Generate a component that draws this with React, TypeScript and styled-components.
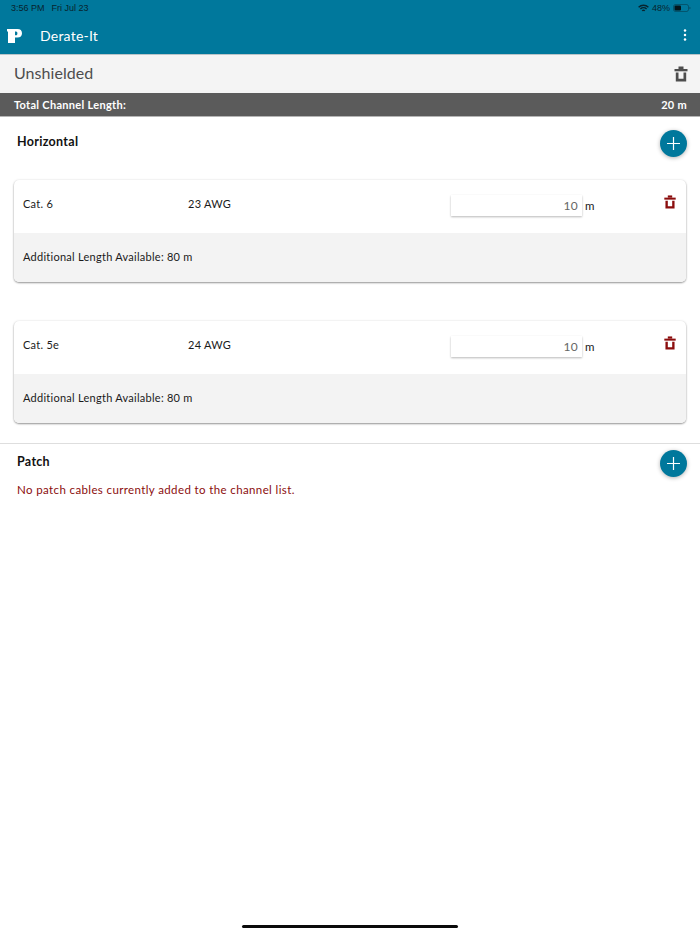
import React from 'react';
import styled, { createGlobalStyle } from 'styled-components';

const GlobalStyle = createGlobalStyle`
  html, body {
    margin: 0;
    padding: 0;
    background: #fff;
    font-family: "Lato", "Open Sans", sans-serif;
  }
`;

const Page = styled.div`
  position: relative;
  width: 700px;
  height: 934px;
  overflow: hidden;
  background: #fff;
`;

const Header = styled.header`
  height: 54px;
  background: #00789c;
  border-bottom: 1px solid #b9c4c8;
  box-sizing: content-box;
`;

const StatusBar = styled.div`
  height: 16px;
  padding: 0 9px 0 11px;
  display: flex;
  align-items: center;
  justify-content: space-between;
  font-family: "Liberation Sans", sans-serif;
  font-size: 9px;
  color: #08242e;
`;

const StatusGroup = styled.div`
  display: flex;
  align-items: center;
  gap: 7px;
`;

const BatteryGroup = styled.div`
  display: flex;
  align-items: center;
  gap: 3px;
`;

const TitleRow = styled.div`
  height: 38px;
  padding: 0 13px 0 7px;
  display: flex;
  align-items: center;
  color: #fff;
`;

const LogoBox = styled.div`
  display: flex;
  margin-top: 2px;
`;

const AppTitle = styled.div`
  margin-left: 18px;
  font-size: 14px;
  letter-spacing: 0.22px;
  flex: 1;
`;

const SubBar = styled.div`
  height: 38px;
  padding: 0 11px 0 14px;
  background: #f4f4f4;
  display: flex;
  align-items: center;
  justify-content: space-between;
  color: #4d4d4d;
`;

const SubTitle = styled.div`
  margin-top: -3px;
  font-size: 16px;
  letter-spacing: 0.05px;
`;

const TotalBar = styled.div`
  height: 23px;
  padding: 0 13px 0 14px;
  background: #5b5b5b;
  border-bottom: 1px solid #b5b5b5;
  display: flex;
  align-items: center;
  justify-content: space-between;
  color: #fff;
  font-size: 11px;
  font-weight: 700;
  letter-spacing: 0.3px;
`;

const SectionHead = styled.div<{ $height: number }>`
  height: ${(p) => p.$height}px;
  padding: 0 13px 0 17px;
  display: flex;
  align-items: flex-start;
  justify-content: space-between;
`;

const SectionTitle = styled.div<{ $top: number }>`
  margin-top: ${(p) => p.$top}px;
  font-size: 12.5px;
  font-weight: 700;
  letter-spacing: 0.3px;
  color: #111;
`;

const Fab = styled.button<{ $top: number }>`
  width: 27px;
  height: 27px;
  margin-top: ${(p) => p.$top}px;
  padding: 0;
  border: 0;
  border-radius: 50%;
  background: #00789c;
  box-shadow: 0 1px 4px rgba(0, 0, 0, 0.3);
  display: flex;
  align-items: center;
  justify-content: center;
`;

const CardList = styled.div`
  display: flex;
  flex-direction: column;
  gap: 39px;
  padding: 0 14px;
`;

const Card = styled.div`
  height: 102px;
  border-radius: 5px;
  overflow: hidden;
  background: #fff;
  box-shadow: 0 1px 2px rgba(0, 0, 0, 0.4), 0 0 3px rgba(0, 0, 0, 0.08);
`;

const CardTop = styled.div`
  height: 53px;
  padding-left: 9px;
  display: flex;
  align-items: center;
  font-size: 11px;
  letter-spacing: 0.26px;
  color: #1a1a1a;
`;

const CatCell = styled.div`
  width: 165px;
  margin-top: -7px;
`;

const AwgCell = styled.div`
  width: 263px;
  margin-top: -7px;
`;

const LengthBox = styled.div`
  width: 131px;
  height: 21px;
  margin-top: -3px;
  padding-right: 4px;
  box-sizing: border-box;
  display: flex;
  align-items: center;
  justify-content: flex-end;
  background: #fff;
  box-shadow: 0 1px 2px rgba(0, 0, 0, 0.28);
  font-size: 12px;
  color: #666;
  letter-spacing: 0.3px;
`;

const Unit = styled.div`
  width: 78px;
  margin-left: 3px;
  margin-top: -3px;
  font-size: 11.5px;
`;

const CardTrash = styled.div`
  display: flex;
  margin-top: -10px;
`;

const CardBottom = styled.div`
  height: 49px;
  padding: 0 0 2px 9px;
  box-sizing: border-box;
  display: flex;
  align-items: center;
  background: #f3f3f3;
  font-size: 11px;
  letter-spacing: 0.26px;
  color: #1a1a1a;
`;

const Divider = styled.div`
  height: 1px;
  margin-top: 20px;
  background: #dedede;
`;

const EmptyNote = styled.div`
  padding-left: 17px;
  margin-top: -6px;
  font-size: 11.5px;
  letter-spacing: 0.38px;
  color: #8b0d0d;
`;

const HomeIndicator = styled.div`
  position: absolute;
  left: 242px;
  bottom: 6px;
  width: 216px;
  height: 3px;
  border-radius: 2px;
  background: #0a0a0a;
`;

const TrashIcon = ({ color, size }: { color: string; size: number }) => (
  <svg width={size} height={size} viewBox="0 0 16 16" fill={color}>
    <rect x="5.5" y="0.5" width="5" height="2.5" />
    <rect x="1.5" y="3" width="13" height="2.3" />
    <path d="M2.8 6.6h2.7v6.2h5V6.6h2.7v8.9H2.8z" />
  </svg>
);

const PlusIcon = () => (
  <svg width="13" height="13" viewBox="0 0 13 13" stroke="#fff" strokeWidth="1.2">
    <path d="M6.5 0v13M0 6.5h13" />
  </svg>
);

const Logo = () => (
  <svg width="15" height="14" viewBox="0 0 15 14" fill="#fff">
    <path
      fillRule="evenodd"
      d="M0 0h10.5C13.4 0 15 1.6 15 4.2s-1.6 4.4-4.5 4.4H8V14H1V2.5H0zM8 2.6v3.6h1c.9 0 1.4-.7 1.4-1.8S9.900 2.600 9 2.600z"
    />
  </svg>
);

const MoreIcon = () => (
  <svg width="4" height="12" viewBox="0 0 4 12" fill="#fff">
    <circle cx="2" cy="1.5" r="1.25" />
    <circle cx="2" cy="6" r="1.25" />
    <circle cx="2" cy="10.5" r="1.25" />
  </svg>
);

const WifiIcon = () => (
  <svg width="11" height="9" viewBox="0 0 11 9" fill="none" stroke="#08242e" strokeWidth="1.4">
    <path d="M.6 3.2a7 7 0 0 1 9.8 0" />
    <path d="M2.4 5a4.4 4.4 0 0 1 6.2 0" />
    <path d="M4.2 6.8a1.900 1.900 0 0 1 2.600 0" />
  </svg>
);

const BatteryIcon = () => (
  <svg width="18" height="8" viewBox="0 0 18 8">
    <rect x="0.5" y="0.5" width="15" height="7" rx="2" fill="none" stroke="#08242e" strokeWidth="0.7" opacity="0.6" />
    <rect x="1.5" y="1.5" width="6.5" height="5" rx="1" fill="#04141a" />
    <path d="M16.5 2.8c.7.2 1 .6 1 1.2s-.3 1-1 1.2z" fill="#08242e" opacity="0.6" />
  </svg>
);

const cables = [
  { cat: 'Cat. 6', awg: '23 AWG' },
  { cat: 'Cat. 5e', awg: '24 AWG' },
];

export default function App() {
  return (
    <Page>
      <GlobalStyle />
      <Header>
        <StatusBar>
          <StatusGroup>
            <span>3:56 PM</span>
            <span>Fri Jul 23</span>
          </StatusGroup>
          <BatteryGroup>
            <WifiIcon />
            <span>48%</span>
            <BatteryIcon />
          </BatteryGroup>
        </StatusBar>
        <TitleRow>
          <LogoBox>
            <Logo />
          </LogoBox>
          <AppTitle>Derate-It</AppTitle>
          <MoreIcon />
        </TitleRow>
      </Header>
      <SubBar>
        <SubTitle>Unshielded</SubTitle>
        <TrashIcon color="#4d4d4d" size={16} />
      </SubBar>
      <TotalBar>
        <span>Total Channel Length:</span>
        <span>20 m</span>
      </TotalBar>
      <SectionHead $height={63}>
        <SectionTitle $top={17}>Horizontal</SectionTitle>
        <Fab $top={13}>
          <PlusIcon />
        </Fab>
      </SectionHead>
      <CardList>
        {cables.map((c) => (
          <Card key={c.cat}>
            <CardTop>
              <CatCell>{c.cat}</CatCell>
              <AwgCell>{c.awg}</AwgCell>
              <LengthBox>10</LengthBox>
              <Unit>m</Unit>
              <CardTrash>
                <TrashIcon color="#8b0d0d" size={14} />
              </CardTrash>
            </CardTop>
            <CardBottom>Additional Length Available: 80 m</CardBottom>
          </Card>
        ))}
      </CardList>
      <Divider />
      <SectionHead $height={45}>
        <SectionTitle $top={10}>Patch</SectionTitle>
        <Fab $top={6}>
          <PlusIcon />
        </Fab>
      </SectionHead>
      <EmptyNote>No patch cables currently added to the channel list.</EmptyNote>
      <HomeIndicator />
    </Page>
  );
}
